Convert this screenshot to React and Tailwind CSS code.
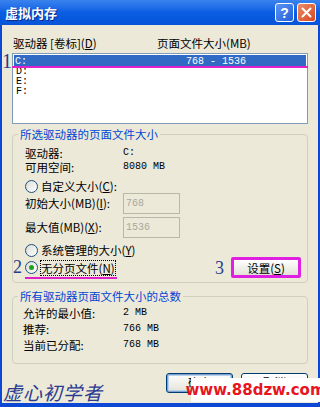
import React from 'react';

const cjk = { fontFamily: '"Noto Sans CJK SC", "Liberation Sans", sans-serif' };
const mono = { fontFamily: '"Liberation Mono", "DejaVu Sans Mono", monospace' };

// 单选按钮 (XP 风格)
const Radio = ({ checked }) => (
  <span className="w-[13px] h-[13px] rounded-full border border-[#1c5180] bg-gradient-to-br from-[#dcdcd6] to-white flex items-center justify-center shrink-0">
    {checked && <span className="w-[5px] h-[5px] rounded-full bg-[#21a121]" />}
  </span>
);

// 带下划线的快捷键
const Key = ({ children }) => (
  <span>(<span className="underline">{children}</span>)</span>
);

const Disabled = ({ value }) => (
  <div className="w-[57px] h-[21px] border border-[#b9b7aa] bg-[#ece9d8] text-[#a8a8a0] text-[10px] leading-[19px] pl-[2px]" style={mono}>
    {value}
  </div>
);

const XpButton = ({ children, focused }) => (
  <div className={`w-[67px] h-[20px] rounded-[3px] border border-[#003c74] bg-gradient-to-b from-white to-[#e3e2d8] flex items-start pt-[1px] justify-center text-[11.5px] leading-[14px] ${focused ? 'shadow-[inset_0_0_0_1px_#7da2ce,inset_0_0_0_2px_#b9d1ea]' : ''}`}>
    {children}
  </div>
);

export default function App() {
  return (
    <div className="w-[320px] h-[407px] bg-[#0c48d4] flex flex-col overflow-hidden text-black" style={cjk}>
      {/* 标题栏 */}
      <div className="h-[25px] shrink-0 bg-gradient-to-b from-[#3a83ee] via-[#0a5de2] to-[#0754d8] flex items-center pl-[5px] pr-[4px]">
        <span className="text-white font-bold text-[13px] [text-shadow:1px_1px_0_#0a2a8a] flex-1">虚拟内存</span>
        <div className="flex gap-[3px]">
          <div className="w-[19px] h-[19px] rounded-[3px] border border-white bg-gradient-to-br from-[#5c94f4] to-[#1f5fd8] flex items-center justify-center text-white font-bold text-[14px] leading-none" style={{ fontFamily: '"Liberation Sans", sans-serif' }}>?</div>
          <div className="w-[19px] h-[19px] rounded-[3px] border border-white bg-gradient-to-br from-[#ec8a66] to-[#d6461c] flex items-center justify-center">
            <svg width="11" height="11" viewBox="0 0 11 11">
              <path d="M1.5 1.5 L9.5 9.5 M9.5 1.5 L1.5 9.5" stroke="white" strokeWidth="2" strokeLinecap="round" />
            </svg>
          </div>
        </div>
      </div>

      {/* 窗口主体 */}
      <div className="flex-1 mx-[2px] mb-[4px] bg-[#ece9d8] px-[10px] pt-[12px] relative text-[11.5px]">
        {/* 列表标题 */}
        <div className="flex h-[12px] leading-[12px] pl-[1px] mb-[4px]">
          <span className="w-[144px]">驱动器 [卷标]<Key>D</Key></span>
          <span>页面文件大小(MB)</span>
        </div>

        {/* 驱动器列表 */}
        <div className="relative h-[71px] border border-[#7f9db9] bg-white p-[1px]">
          <div className="h-[12px] bg-[#316ac5] text-white flex items-center text-[10px]" style={mono}>
            <span className="w-[172px] pl-[1px]">C:</span>
            <span>768 - 1536</span>
          </div>
          {['D:', 'E:', 'F:'].map((d) => (
            <div key={d} className="h-[10px] leading-[10px] text-[10px] pl-[2px]" style={mono}>{d}</div>
          ))}
          <div className="absolute left-[-1px] right-[-1px] top-[12px] h-[2px] bg-[#e020c8]" />
          <span className="absolute left-[-11px] top-[-3px] text-[20px] leading-[20px] text-[#283c8c]" style={{ fontFamily: '"Liberation Serif", serif' }}>1</span>
        </div>

        {/* 所选驱动器的页面文件大小 */}
        <fieldset className="mt-[3px] border border-[#d0d0bf] rounded-[4px] pl-[12px] pr-[6px] pt-[5px] pb-[4px]">
          <legend className="ml-[-7px] px-[2px] text-[#0046d5] leading-[14px]">所选驱动器的页面文件大小</legend>
          <div className="flex h-[14px] leading-[14px] items-center">
            <span className="w-[98px]">驱动器:</span>
            <span className="text-[10px]" style={mono}>C:</span>
          </div>
          <div className="flex h-[14px] leading-[14px] items-center">
            <span className="w-[98px]">可用空间:</span>
            <span className="text-[10px]" style={mono}>8080 MB</span>
          </div>
          <div className="flex h-[14px] leading-[14px] items-center gap-[3px] mt-[5px]">
            <Radio />
            <span>自定义大小<Key>C</Key>:</span>
          </div>
          <div className="flex h-[21px] items-center">
            <span className="w-[98px]">初始大小(MB)<Key>I</Key>:</span>
            <Disabled value="768" />
          </div>
          <div className="flex h-[21px] items-center mt-[3px]">
            <span className="w-[98px]">最大值(MB)<Key>X</Key>:</span>
            <Disabled value="1536" />
          </div>
          <div className="flex h-[13px] leading-[13px] items-center gap-[3px] mt-[6px]">
            <Radio />
            <span>系统管理的大小<Key>Y</Key></span>
          </div>
          <div className="flex h-[21px] items-center">
            <div className="relative flex items-center gap-[3px] leading-[14px]">
              <span className="absolute left-[-12px] top-[-3px] text-[18px] leading-[18px] text-[#283c8c]" style={{ fontFamily: '"Liberation Serif", serif' }}>2</span>
              <Radio checked />
              <span className="outline outline-1 outline-dotted outline-black">无分页文件<Key>N</Key></span>
              <span className="absolute left-0 right-[-2px] bottom-[-4px] h-[2px] bg-[#e020c8]" />
            </div>
            <div className="flex-1" />
            <span className="text-[18px] leading-[18px] text-[#283c8c] mr-[7px]" style={{ fontFamily: '"Liberation Serif", serif' }}>3</span>
            <div className="w-[70px] h-[21px] border-[3px] border-[#e020e0] rounded-[2px] bg-gradient-to-b from-white to-[#e3e2d8] flex items-center justify-center leading-[14px]">
              设置<Key>S</Key>
            </div>
          </div>
        </fieldset>

        {/* 所有驱动器页面文件大小的总数 */}
        <fieldset className="mt-[6px] border border-[#d0d0bf] rounded-[4px] pl-[10px] pt-[2px] pb-[10px]">
          <legend className="ml-[-5px] px-[2px] text-[#0046d5] leading-[14px]">所有驱动器页面文件大小的总数</legend>
          {[
            ['允许的最小值:', '2 MB'],
            ['推荐:', '766 MB'],
            ['当前已分配:', '768 MB'],
          ].map(([k, v]) => (
            <div key={k} className="flex h-[16px] leading-[16px] items-center">
              <span className="w-[100px]">{k}</span>
              <span className="text-[10px]" style={mono}>{v}</span>
            </div>
          ))}
        </fieldset>

        {/* 确定 / 取消 */}
        <div className="flex justify-end gap-[8px] mt-[9px]">
          <XpButton focused>确定</XpButton>
          <XpButton>取消</XpButton>
        </div>

        {/* 水印 */}
        <span className="absolute left-[1px] bottom-[0px] text-[19px] leading-[22px] text-[#2a3a90] italic tracking-[1px]">虚心初学者</span>
        <div className="absolute right-[-2px] bottom-[1px] w-[129px] h-[24px] bg-white flex items-center justify-center">
          <span className="text-[#e8141e] font-bold text-[15px] leading-[18px]" style={{ fontFamily: '"DejaVu Sans", sans-serif' }}>www.88dzw.com</span>
        </div>
      </div>
    </div>
  );
}
